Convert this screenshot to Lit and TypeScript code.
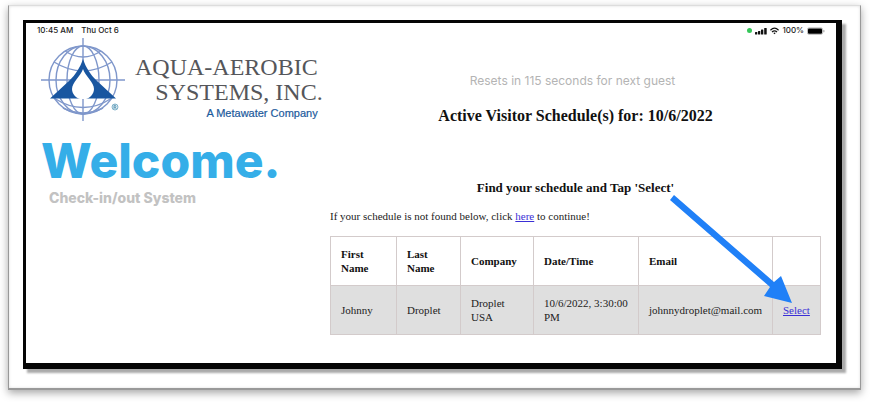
import { LitElement, html, css, svg } from "lit";
import { customElement, property } from "lit/decorators.js";

interface Visit {
  first: string;
  last: string;
  company: string;
  when: string;
  email: string;
}

@customElement("status-bar")
class StatusBar extends LitElement {
  static styles = css`
    :host {
      display: flex;
      justify-content: space-between;
      align-items: center;
      height: 15px;
      padding: 0 11px;
      font: 500 8px/15px Inter, "Liberation Sans", sans-serif;
      color: #222;
    }
    .group { display: flex; align-items: center; gap: 3px; }
    .clock { gap: 8px; }
    .dot { width: 5px; height: 5px; border-radius: 50%; background: #35c759; }
    svg { display: block; }
  `;
  render() {
    return html`
      <div class="group clock"><span>10:45 AM</span><span>Thu Oct 6</span></div>
      <div class="group">
        <span class="dot"></span>
        <svg width="12" height="8" viewBox="0 0 12 8" fill="#111">
          <rect x="0" y="5" width="2.3" height="2.5" rx=".5" /><rect x="3" y="4" width="2.3" height="3.5" rx=".5" />
          <rect x="6" y="2.5" width="2.3" height="5" rx=".5" /><rect x="9.2" y="1" width="2.5" height="6.5" rx=".5" />
        </svg>
        <svg width="9" height="8" viewBox="0 0 9 8" fill="none" stroke="#111" stroke-width="1.2">
          <path d="M.4 3.2Q4.5-.8 8.6 3.2M2 5Q4.5 2.6 7 5" /><path d="M3.3 5.9Q4.5 4.9 5.7 5.9L4.5 7.3z" fill="#111" stroke="none" />
        </svg>
        <span>100%</span>
        <svg width="18" height="8" viewBox="0 0 18 8">
          <rect x=".4" y=".9" width="15.2" height="6.4" rx="1.6" fill="none" stroke="#999" stroke-width=".7" />
          <rect x="1" y="1.4" width="14" height="5.4" rx="1" fill="#000" /><rect x="16.4" y="3" width="1" height="2.2" rx=".5" fill="#999" />
        </svg>
      </div>
    `;
  }
}

@customElement("company-logo")
class CompanyLogo extends LitElement {
  static styles = css`
    :host { display: flex; align-items: flex-start; gap: 10px; }
    svg { display: block; flex: none; }
    .words { padding-top: 17px; text-align: right; white-space: nowrap; }
    .name {
      font: 24px/25px "Liberation Serif", serif;
      color: #55565a;
    }
    .first { padding-right: 5px; }
    .tag {
      padding-right: 5px;
      font: 11px/16px "Liberation Sans", sans-serif;
      color: #1c5a9c;
      -webkit-text-stroke: 0.2px #1c5a9c;
    }
  `;
  render() {
    const globe = svg`
      <g fill="none" stroke="#7f97cb" stroke-width="1.4">
        <circle cx="42" cy="42" r="34" />
        <path d="M42 0V83M0 42H84" />
        <ellipse cx="42" cy="42" rx="27" ry="34" />
        <ellipse cx="42" cy="42" rx="16" ry="34" />
        <path d="M24 13Q42 25 60 13M13 24Q42 42 71 24M13 60Q42 79 71 60M22 70Q42 80 62 70" />
      </g>
      <path fill="#1956a0" d="M42 21C45 30 50 37 55 42L75 60.500H9L29 42C34 37 39 30 42 21z" />
      <path fill="#fff" d="M42 31C44 38 53 44 53 51C53 56 49 60 45 61H39C35 60 31 56 31 51C31 44 40 38 42 31z" />
      <circle cx="74" cy="69" r="3" fill="#e4f0f5" stroke="#5598b8" stroke-width=".7" />
      <path d="M73 71V67.300H74.500Q75.500 68.300 74.500 69.200H73M74.300 69.200L75.300 71" fill="none" stroke="#3b82a8" stroke-width=".7" />
    `;
    return html`
      <svg width="84" height="84" viewBox="0 0 84 84" role="img" aria-label="Globe with water drop">${globe}</svg>
      <div class="words">
        <div class="name first">AQUA-AEROBIC</div>
        <div class="name">SYSTEMS, INC.</div>
        <div class="tag">A Metawater Company</div>
      </div>
    `;
  }
}

@customElement("schedule-table")
class ScheduleTable extends LitElement {
  @property({ attribute: false }) visits: Visit[] = [];
  static styles = css`
    :host { display: block; position: relative; }
    table {
      width: 100%;
      table-layout: fixed;
      border-collapse: collapse;
      font: 11px/14px "Liberation Serif", serif;
      color: #222;
    }
    .c1 { width: 66px; }
    .c2 { width: 64px; }
    .c3 { width: 73px; }
    .c4 { width: 105px; }
    .c5 { width: 134px; }
    .c6 { width: 48px; }
    th, td {
      height: 49px;
      padding: 0 10px;
      border: 1px solid #d3cbcb;
      text-align: left;
      box-sizing: border-box;
    }
    th { color: #111; }
    tbody tr { background: #dfdfdf; }
    a { color: #3a2fd6; }
    .arrow {
      position: absolute;
      right: 28px;
      bottom: 32px;
      pointer-events: none;
    }
  `;
  render() {
    return html`
      <table>
        <colgroup>
          <col class="c1" /><col class="c2" /><col class="c3" /><col class="c4" /><col class="c5" /><col class="c6" />
        </colgroup>
        <thead>
          <tr><th>First Name</th><th>Last Name</th><th>Company</th><th>Date/Time</th><th>Email</th><th></th></tr>
        </thead>
        <tbody>
          ${this.visits.map(
            (v) => html`<tr>
              <td>${v.first}</td><td>${v.last}</td><td>${v.company}</td><td>${v.when}</td><td>${v.email}</td>
              <td><a href="#select">Select</a></td>
            </tr>`
          )}
        </tbody>
      </table>
      <svg class="arrow" width="125" height="109" viewBox="0 0 125 109" fill="#2080f7" aria-hidden="true">
        <path d="M6 1L106 88L113 82L124 109L96 102L102 93L2 6z" />
      </svg>
    `;
  }
}

@customElement("app-root")
class AppRoot extends LitElement {
  private visits: Visit[] = [
    {
      first: "Johnny",
      last: "Droplet",
      company: "Droplet USA",
      when: "10/6/2022, 3:30:00 PM",
      email: "johnnydroplet@mail.com",
    },
  ];
  static styles = css`
    :host { display: block; background: #fff; overflow: hidden; }
    .frame {
      margin: 5px 9px 12px 8px;
      padding: 14px 18px 19px 14px;
      border: 1px solid #999;
      border-top-color: #ddd;
      border-width: 1px 1px 2px 1px;
      box-shadow: 0 3px 8px rgba(0, 0, 0, 0.35), inset 0 0 3px #ddd;
    }
    .screen {
      border: solid #050505;
      border-width: 3px 6px 6px 3px;
      box-shadow: 4px 4px 2px #aaa;
      background: #fff;
    }
    .body {
      display: grid;
      grid-template-columns: 289px minmax(0, 1fr);
      padding: 0 15px 28px 15px;
    }
    .welcome {
      margin: 14px 0 0;
      font: 800 48px/50px Inter, sans-serif;
      color: #35aee8;
    }
    .sub {
      margin: 4px 0 0 8px;
      font: 800 14px/16px Inter, sans-serif;
      color: #c2c2c2;
    }
    .resets {
      margin: 35px 0 0;
      padding-right: 6px;
      text-align: center;
      font: 12px/16px Inter, sans-serif;
      color: #b4b4b4;
    }
    h1, h2, .hint { font-family: "Liberation Serif", serif; color: #111; }
    h1 { margin: 16px 0 0; text-align: center; font-size: 16px; line-height: 22px; }
    h2 { margin: 52px 0 0; text-align: center; font-size: 13px; line-height: 18px; }
    .hint { margin: 12px 0 13px; font-size: 11px; line-height: 14px; color: #222; }
    .hint a { color: #3a2fd6; }
  `;
  render() {
    return html`
      <div class="frame">
        <main class="screen">
          <status-bar></status-bar>
          <div class="body">
            <section>
              <company-logo></company-logo>
              <p class="welcome">Welcome.</p>
              <p class="sub">Check-in/out System</p>
            </section>
            <section>
              <p class="resets">Resets in 115 seconds for next guest</p>
              <h1>Active Visitor Schedule(s) for: 10/6/2022</h1>
              <h2>Find your schedule and Tap 'Select'</h2>
              <p class="hint">If your schedule is not found below, click <a href="#continue">here</a> to continue!</p>
              <schedule-table .visits=${this.visits}></schedule-table>
            </section>
          </div>
        </main>
      </div>
    `;
  }
}
